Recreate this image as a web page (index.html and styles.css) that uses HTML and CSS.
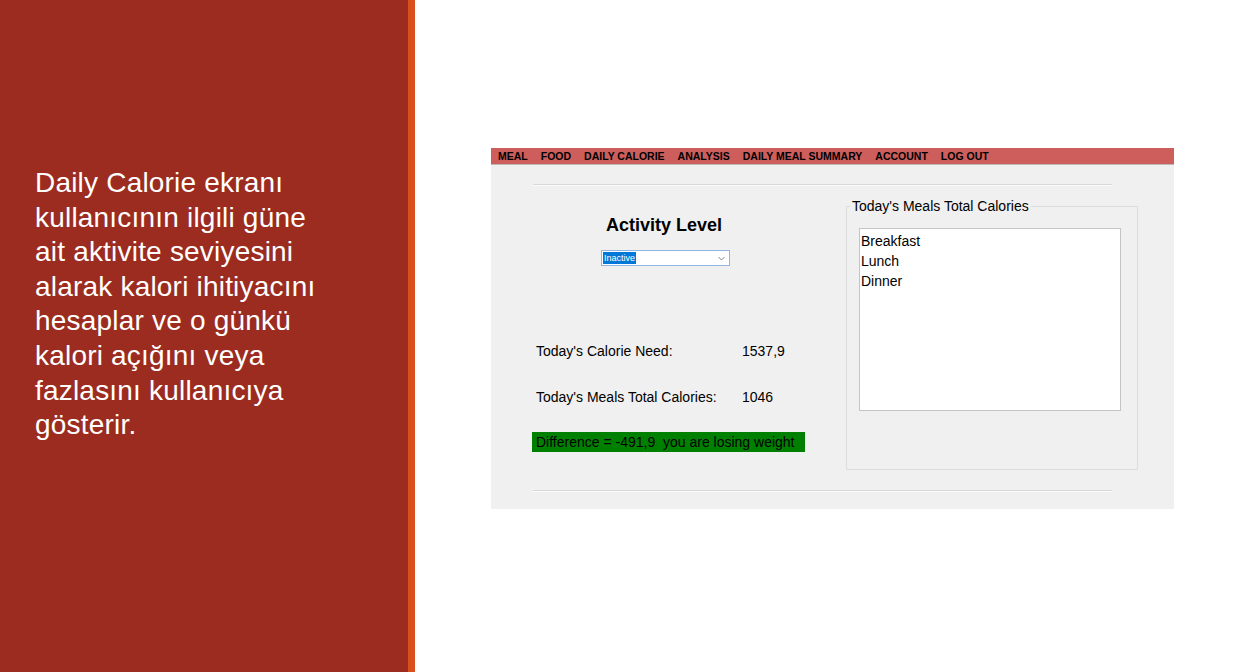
FILE: index.html
```html
<!DOCTYPE html>
<html lang="tr">
<head>
<meta charset="utf-8">
<title>Daily Calorie</title>
<link rel="stylesheet" href="styles.css">
</head>
<body>
<div class="slide">
  <aside class="panel">
    <p class="caption">Daily Calorie ekranı<br>kullanıcının ilgili güne<br>ait aktivite seviyesini<br>alarak kalori ihitiyacını<br>hesaplar ve o günkü<br>kalori açığını veya<br>fazlasını kullanıcıya<br>gösterir.</p>
  </aside>
  <div class="stripe"></div>
  <main class="stage">
    <div class="window">
      <nav class="menubar">
        <span>MEAL</span>
        <span>FOOD</span>
        <span>DAILY CALORIE</span>
        <span>ANALYSIS</span>
        <span>DAILY MEAL SUMMARY</span>
        <span>ACCOUNT</span>
        <span>LOG OUT</span>
      </nav>
      <div class="content">
        <div class="sep"></div>
        <div class="row">
          <div class="leftcol">
            <h2 class="heading">Activity Level</h2>
            <div class="combo">
              <span class="combo-sel">Inactive</span>
              <svg class="chev" width="7" height="5" viewBox="0 0 7 5"><path d="M0.5 1 L3.5 4 L6.5 1" fill="none" stroke="#888" stroke-width="1"/></svg>
            </div>
            <div class="stat first"><span class="lbl">Today's Calorie Need:</span><span class="val">1537,9</span></div>
            <div class="stat second"><span class="lbl">Today's Meals Total Calories:</span><span class="val">1046</span></div>
            <div class="diff">Difference = -491,9&nbsp; you are losing weight</div>
          </div>
          <fieldset class="group">
            <legend class="legend">Today's Meals Total Calories</legend>
            <ul class="listbox">
              <li>Breakfast</li>
              <li>Lunch</li>
              <li>Dinner</li>
            </ul>
          </fieldset>
        </div>
        <div class="sep bottom"></div>
      </div>
    </div>
  </main>
</div>
</body>
</html>
```
FILE: styles.css
```css
* { box-sizing: border-box; }
html, body { margin: 0; padding: 0; }
body { width: 1237px; height: 672px; overflow: hidden; background: #fff; }

.slide { display: flex; height: 672px; }

.panel {
  width: 408px;
  flex: none;
  background: #9b2c1f;
  padding: 166px 0 0 35px;
}
.caption {
  margin: 0;
  color: #fff;
  font-family: "Liberation Sans", Arial, sans-serif;
  font-size: 28px;
  line-height: 34.6px;
  letter-spacing: 0.2px;
  white-space: nowrap;
}
.stripe { width: 7px; flex: none; background: #d9501e; }

.stage { flex: 1; padding: 148px 0 0 76px; }

.window {
  width: 683px;
  height: 361px;
  background: #f0f0f0;
  font-family: "Comic Sans MS", "Liberation Sans", Arial, sans-serif;
  color: #000;
}

.menubar {
  height: 17px;
  background: #cd5e5c;
  display: flex;
  align-items: center;
  gap: 13px;
  padding-left: 7px;
  font-size: 10.5px;
  font-weight: bold;
  border-bottom: 1px solid #b9b9b9;
}

.content { padding-top: 19px; }
.sep {
  margin-left: 42px;
  width: 579px;
  height: 2px;
  border-top: 1px solid #d9d9d9;
  border-bottom: 1px solid #fbfbfb;
}
.sep.bottom { margin-top: 20px; }

.row { display: flex; align-items: flex-start; padding-left: 41px; }

.leftcol { width: 273px; flex: none; display: flex; flex-direction: column; }
.heading {
  margin: 28px 0 0 0;
  font-size: 18px;
  line-height: 22px;
  font-weight: bold;
  text-align: center;
  padding-right: 9px;
}
.combo {
  margin: 14px 0 0 69px;
  width: 129px;
  height: 16px;
  background: #fff;
  border: 1px solid #8fb5e0;
  display: flex;
  align-items: center;
  justify-content: space-between;
  padding: 0 4px 0 1px;
}
.combo-sel {
  background: #0078d7;
  color: #fff;
  font-size: 9px;
  line-height: 12px;
  padding: 0 1px;
}
.chev { display: block; }

.stat { display: flex; font-size: 14px; line-height: 20px; padding-left: 4px; }
.stat.first { margin-top: 75px; }
.stat.second { margin-top: 26px; }
.lbl { width: 206px; flex: none; }

.diff {
  margin-top: 25px;
  height: 20px;
  background: #008000;
  font-size: 14px;
  line-height: 20px;
  padding-left: 4px;
  white-space: nowrap;
}

.group {
  margin: 12px 0 0 41px;
  width: 292px;
  height: 272px;
  padding: 0 15px 0 12px;
  border: 1px solid #dcdcdc;
  min-width: 0;
}
.legend {
  font-size: 14px;
  line-height: 16px;
  padding: 0 2px;
  margin-left: -9px;
}
.listbox {
  list-style: none;
  margin: 14px 0 0 0;
  padding: 2px 0 0 1px;
  width: 262px;
  height: 183px;
  background: #fff;
  border: 1px solid #c4c4c4;
  font-size: 14px;
  line-height: 20px;
}
```
